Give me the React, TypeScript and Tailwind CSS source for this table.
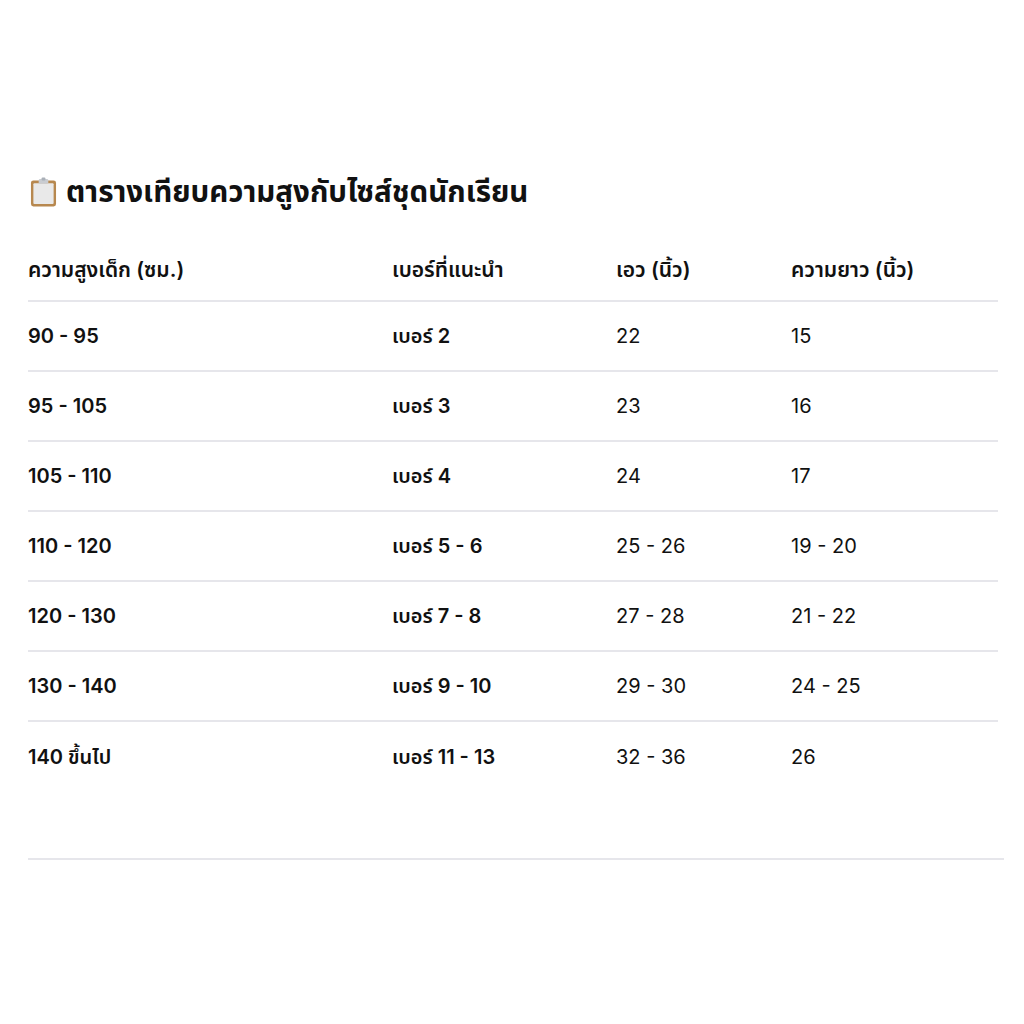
import React from "react";

const ROWS: [string, string, string, string][] = [
  ["90 - 95", "เบอร์ 2", "22", "15"],
  ["95 - 105", "เบอร์ 3", "23", "16"],
  ["105 - 110", "เบอร์ 4", "24", "17"],
  ["110 - 120", "เบอร์ 5 - 6", "25 - 26", "19 - 20"],
  ["120 - 130", "เบอร์ 7 - 8", "27 - 28", "21 - 22"],
  ["130 - 140", "เบอร์ 9 - 10", "29 - 30", "24 - 25"],
  ["140 ขึ้นไป", "เบอร์ 11 - 13", "32 - 36", "26"],
];

const COLS = "grid grid-cols-[364px_224px_175px_207px]";

function Clipboard() {
  return (
    <svg width="27" height="30" viewBox="0 0 28 30" className="shrink-0">
      <rect x="1" y="3" width="26" height="27" rx="2.5" fill="#b7884f" />
      <rect x="3.5" y="6" width="21" height="21.5" rx="1" fill="#e9e9e9" />
      <rect x="9" y="1.5" width="10" height="5" rx="1.5" fill="#c9ccd1" />
      <rect x="12" y="0" width="4" height="3" rx="1" fill="#aab0b8" />
    </svg>
  );
}

export default function App() {
  return (
    <div
      className="min-h-screen bg-white text-[#111] pt-[174px]"
      style={{ fontFamily: 'Inter, "Noto Sans Thai", "Noto Sans", sans-serif' }}
    >
      <div className="flex items-center gap-[9px] pl-[30px] h-[36px]">
        <Clipboard />
        <h1 className="text-[29.5px] font-bold leading-none">ตารางเทียบความสูงกับไซส์ชุดนักเรียน</h1>
      </div>

      <div className="ml-[28px] mt-[24px] w-[970px]">
        <div className={`${COLS} h-[68px] pt-[6px] items-center border-b-2 border-[#e6e6eb] text-[21px] font-semibold`}>
          <div>ความสูงเด็ก (ซม.)</div>
          <div>เบอร์ที่แนะนำ</div>
          <div>เอว (นิ้ว)</div>
          <div>ความยาว (นิ้ว)</div>
        </div>
        {ROWS.map((r, i) => (
          <div
            key={r[0]}
            className={`${COLS} h-[70px] items-center text-[20px] ${i < ROWS.length - 1 ? "border-b-2 border-[#e6e6eb]" : ""}`}
          >
            <div className="font-semibold">{r[0]}</div>
            <div className="font-semibold">{r[1]}</div>
            <div>{r[2]}</div>
            <div>{r[3]}</div>
          </div>
        ))}
      </div>

      <div className="ml-[28px] mt-[66px] w-[976px] border-b-2 border-[#e6e6eb]" />
    </div>
  );
}
